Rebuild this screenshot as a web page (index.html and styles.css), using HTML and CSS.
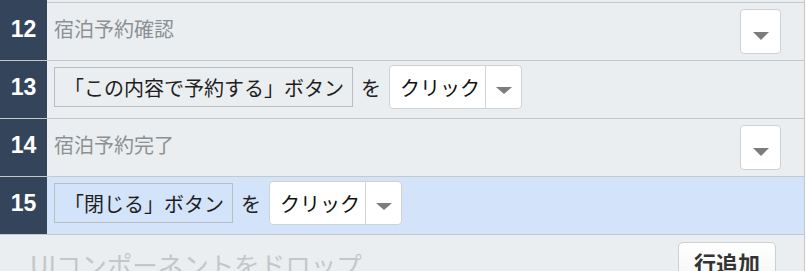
FILE: index.html
```html
<!DOCTYPE html>
<html lang="ja">
<head>
<meta charset="utf-8">
<link rel="stylesheet" href="styles.css">
</head>
<body>
<div class="list">
  <div class="row stub"><div class="num"></div><div class="body"></div></div>
  <div class="row">
    <div class="num">12</div>
    <div class="body">
      <span class="title">宿泊予約確認</span>
      <span class="spacer"></span>
      <span class="drop"><span class="tri big"></span></span>
    </div>
  </div>
  <div class="row">
    <div class="num">13</div>
    <div class="body">
      <span class="label">「この内容で予約する」ボタン</span>
      <span class="wo">を</span>
      <span class="select"><span class="sel-text">クリック</span><span class="sel-arrow"><span class="tri"></span></span></span>
    </div>
  </div>
  <div class="row">
    <div class="num">14</div>
    <div class="body">
      <span class="title">宿泊予約完了</span>
      <span class="spacer"></span>
      <span class="drop"><span class="tri big"></span></span>
    </div>
  </div>
  <div class="row active">
    <div class="num">15</div>
    <div class="body">
      <span class="label">「閉じる」ボタン</span>
      <span class="wo">を</span>
      <span class="select"><span class="sel-text">クリック</span><span class="sel-arrow"><span class="tri"></span></span></span>
    </div>
  </div>
  <div class="footer">
    <span class="droptext">UIコンポーネントをドロップ</span>
    <span class="addbtn">行追加</span>
  </div>
</div>
</body>
</html>
```
FILE: styles.css
```css
html, body {
  margin: 0;
  padding: 0;
  background: #ffffff;
  overflow: hidden;
}
body {
  font-family: "Noto Sans CJK JP", "Liberation Sans", sans-serif;
}
.list {
  width: 804px;
  height: 271px;
  border-right: 1px solid #c3c7ca;
  background: #ebeef0;
  overflow: hidden;
}
.row {
  display: flex;
  height: 57px;
  border-bottom: 1px solid #c5c9cc;
  background: #ebeef0;
}
.row.stub {
  height: 2px;
}
.row.active {
  background: #d3e3f9;
}
.num {
  width: 47px;
  flex: none;
  background: #34455b;
  color: #ffffff;
  font-family: "Liberation Sans", Arial, sans-serif;
  font-weight: bold;
  font-size: 23px;
  display: flex;
  align-items: center;
  justify-content: center;
  padding-bottom: 5px;
  box-sizing: border-box;
}
.body {
  flex: 1;
  display: flex;
  align-items: center;
  padding: 0 23px 5px 7px;
}
.title {
  font-size: 20px;
  color: #8b9094;
  line-height: 24px;
}
.spacer {
  flex: 1;
}
.drop {
  width: 41px;
  height: 45px;
  box-sizing: border-box;
  background: #ffffff;
  border: 1px solid #cfd2d4;
  border-radius: 4px;
  display: flex;
  justify-content: center;
  align-items: center;
  margin-top: 4px;
}
.tri {
  width: 0;
  height: 0;
  border-left: 8px solid transparent;
  border-right: 8px solid transparent;
  border-top: 7px solid #7c7c7c;
  margin-top: 6px;
}
.tri.big {
  border-top-width: 8px;
  margin-top: 10px;
}
.label {
  height: 40px;
  box-sizing: border-box;
  border: 1px solid #b9bdc0;
  padding: 0 8px 0 9px;
  font-size: 20px;
  color: #1e1e1e;
  display: flex;
  align-items: center;
}
.wo {
  font-size: 20px;
  color: #222;
  margin: 0 8px 0 8px;
}
.select {
  width: 133px;
  height: 44px;
  box-sizing: border-box;
  background: #ffffff;
  border: 1px solid #cfd2d4;
  border-radius: 4px;
  display: flex;
  align-items: stretch;
}
.sel-text {
  width: 96px;
  box-sizing: border-box;
  padding-left: 10px;
  font-size: 20px;
  color: #111;
  display: flex;
  align-items: center;
  border-right: 1px solid #d2d5d7;
}
.sel-arrow {
  flex: 1;
  display: flex;
  align-items: center;
  justify-content: center;
}
.footer {
  display: flex;
  align-items: flex-start;
  padding: 7px 28px 0 30px;
}
.droptext {
  flex: 1;
  font-size: 25.5px;
  color: #c3c7ca;
  line-height: 1;
  padding-top: 9px;
}
.addbtn {
  width: 98px;
  height: 44px;
  box-sizing: border-box;
  border: 1px solid #cdd0d2;
  border-radius: 5px;
  background: linear-gradient(#ffffff, #f3f4f5);
  font-size: 22px;
  font-weight: bold;
  color: #333;
  display: flex;
  align-items: flex-start;
  justify-content: center;
  padding-top: 4px;
  line-height: 30px;
}
```
